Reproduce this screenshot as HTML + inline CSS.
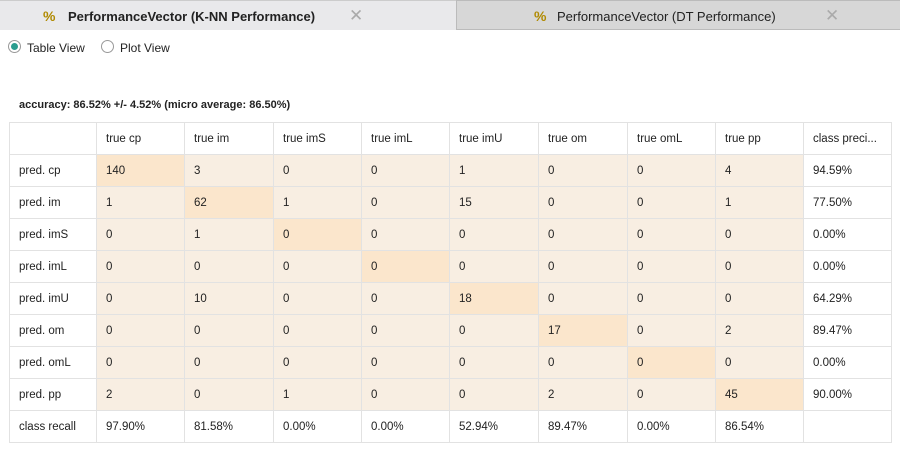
<!DOCTYPE html>
<html><head><style>
body{margin:0;width:900px;height:449px;background:#fff;font-family:"Liberation Sans",Arial,sans-serif;font-size:12px;color:#222;position:relative;overflow:hidden}
.tab{position:absolute;top:0;height:30px;box-sizing:border-box;}
.t1{left:0;width:457px;background:#e9e9eb;border-top:1px solid #ccc;}
.t2{left:456px;width:444px;background:#d7d7d7;border:1px solid #bbb;border-right:none}
.tab .ic{position:absolute;top:7px;color:#b08a00;font-weight:bold;font-size:14px}
.tab .lb{position:absolute;top:8px;font-size:13px;}
.tab .x{position:absolute;top:5px;font-size:17px;color:#aaa}
.radio{position:absolute;top:40px;width:13px;height:13px;border:1px solid #999;border-radius:50%;box-sizing:border-box;background:#fff}
.radio.on::after{content:"";position:absolute;left:2px;top:2px;width:7px;height:7px;border-radius:50%;background:#2a9d8f}
.rl{position:absolute;top:41px;font-size:12px}
.acc{position:absolute;left:19px;top:99px;font-size:11px;font-weight:bold}
table{position:absolute;left:9px;top:122px;border-collapse:collapse;table-layout:fixed;width:882px}
td{border:1px solid #e2e2e2;height:32px;padding:0 0 0 9px;box-sizing:border-box;font-size:11.5px}
.o{background:#f8eee2}.d{background:#fbe6cc}
</style></head><body>
<div class="tab t1"><span class="ic" style="left:43px">%</span><span class="lb" style="left:68px;font-weight:bold">PerformanceVector (K-NN Performance)</span><span class="x" style="left:349px">✕</span></div>
<div class="tab t2"><span class="ic" style="left:77px">%</span><span class="lb" style="left:100px">PerformanceVector (DT Performance)</span><span class="x" style="left:368px">✕</span></div>
<div class="radio on" style="left:8px"></div><span class="rl" style="left:27px">Table View</span>
<div class="radio" style="left:101px"></div><span class="rl" style="left:120px">Plot View</span>
<div class="acc">accuracy: 86.52% +/- 4.52% (micro average: 86.50%)</div>
<table>
<colgroup><col style="width:87px"><col style="width:88px"><col style="width:89px"><col style="width:88px"><col style="width:88px"><col style="width:89px"><col style="width:89px"><col style="width:88px"><col style="width:88px"><col style="width:88px"></colgroup>
<tr><td></td><td>true cp</td><td>true im</td><td>true imS</td><td>true imL</td><td>true imU</td><td>true om</td><td>true omL</td><td>true pp</td><td>class preci...</td></tr>
<tr><td>pred. cp</td><td class="d">140</td><td class="o">3</td><td class="o">0</td><td class="o">0</td><td class="o">1</td><td class="o">0</td><td class="o">0</td><td class="o">4</td><td>94.59%</td></tr>
<tr><td>pred. im</td><td class="o">1</td><td class="d">62</td><td class="o">1</td><td class="o">0</td><td class="o">15</td><td class="o">0</td><td class="o">0</td><td class="o">1</td><td>77.50%</td></tr>
<tr><td>pred. imS</td><td class="o">0</td><td class="o">1</td><td class="d">0</td><td class="o">0</td><td class="o">0</td><td class="o">0</td><td class="o">0</td><td class="o">0</td><td>0.00%</td></tr>
<tr><td>pred. imL</td><td class="o">0</td><td class="o">0</td><td class="o">0</td><td class="d">0</td><td class="o">0</td><td class="o">0</td><td class="o">0</td><td class="o">0</td><td>0.00%</td></tr>
<tr><td>pred. imU</td><td class="o">0</td><td class="o">10</td><td class="o">0</td><td class="o">0</td><td class="d">18</td><td class="o">0</td><td class="o">0</td><td class="o">0</td><td>64.29%</td></tr>
<tr><td>pred. om</td><td class="o">0</td><td class="o">0</td><td class="o">0</td><td class="o">0</td><td class="o">0</td><td class="d">17</td><td class="o">0</td><td class="o">2</td><td>89.47%</td></tr>
<tr><td>pred. omL</td><td class="o">0</td><td class="o">0</td><td class="o">0</td><td class="o">0</td><td class="o">0</td><td class="o">0</td><td class="d">0</td><td class="o">0</td><td>0.00%</td></tr>
<tr><td>pred. pp</td><td class="o">2</td><td class="o">0</td><td class="o">1</td><td class="o">0</td><td class="o">0</td><td class="o">2</td><td class="o">0</td><td class="d">45</td><td>90.00%</td></tr>
<tr><td>class recall</td><td>97.90%</td><td>81.58%</td><td>0.00%</td><td>0.00%</td><td>52.94%</td><td>89.47%</td><td>0.00%</td><td>86.54%</td><td></td></tr>
</table>
</body></html>
